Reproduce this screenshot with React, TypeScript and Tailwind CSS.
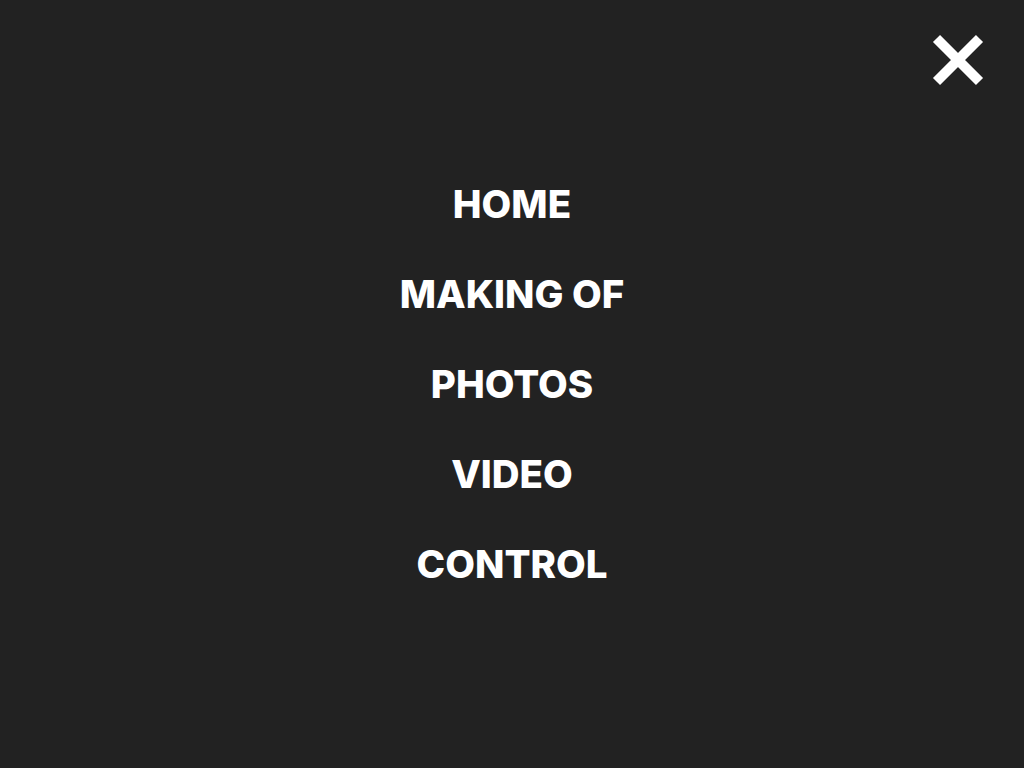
import React from "react";

const items = ["HOME", "MAKING OF", "PHOTOS", "VIDEO", "CONTROL"];

export default function App() {
  return (
    <div className="relative flex h-[768px] w-full items-center justify-center bg-[#222222] text-white" style={{ fontFamily: "Inter, 'Noto Sans', sans-serif" }}>
      <button className="absolute right-[38px] top-[32px] h-[56px] w-[56px]" aria-label="Close">
        <svg viewBox="0 0 56 56" width="56" height="56">
          <path d="M6.5 6.5 L49.5 49.5 M49.5 6.5 L6.5 49.5" stroke="white" strokeWidth="10" strokeLinecap="butt" />
        </svg>
      </button>
      <nav className="flex flex-col items-center">
        {items.map((t) => (
          <a key={t} className="flex h-[90px] items-center text-[38.5px] font-extrabold leading-none">
            {t}
          </a>
        ))}
      </nav>
    </div>
  );
}
